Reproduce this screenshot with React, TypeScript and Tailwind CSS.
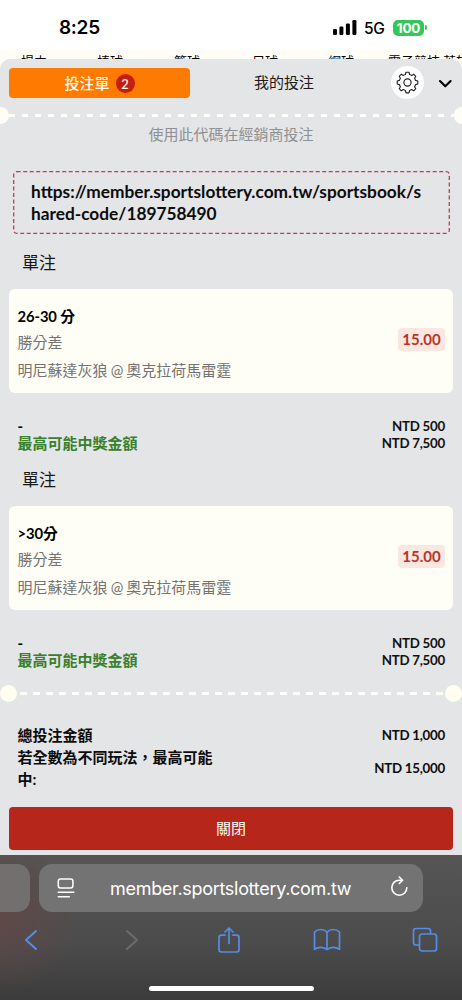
import React from "react";

const sports = [
  { name: "場中", pad: "w-[76px] pl-[21px]" },
  { name: "棒球", pad: "w-[77px] pl-[21px]" },
  { name: "籃球", pad: "w-[77px] pl-[21px]" },
  { name: "足球", pad: "w-[77px] pl-[22px]" },
  { name: "網球", pad: "w-[60px] pl-[21px]" },
  { name: "電子競技", pad: "w-[76px] pl-[21px]" },
  { name: "英雄", pad: "w-[40px]" },
];

const bets = [
  { pick: "26-30 分", market: "勝分差", match: "明尼蘇達灰狼 @ 奧克拉荷馬雷霆", odds: "15.00", stake: "NTD 500", payout: "NTD 7,500" },
  { pick: ">30分", market: "勝分差", match: "明尼蘇達灰狼 @ 奧克拉荷馬雷霆", odds: "15.00", stake: "NTD 500", payout: "NTD 7,500" },
];

function StatusBar() {
  return (
    <div className="h-[50px] shrink-0 bg-white flex justify-between pl-[59px] pr-[35px] pt-[14px] font-['Inter','Liberation_Sans',sans-serif]">
      <span className="text-[19px] leading-[28px] font-semibold text-black tracking-[-0.3px]">8:25</span>
      <div className="flex items-center h-[27px]">
        <svg width="24" height="15" viewBox="0 0 24 15">
          <rect x="0" y="9" width="4" height="6" rx="1.2" />
          <rect x="6.4" y="6.5" width="4" height="8.5" rx="1.2" />
          <rect x="12.9" y="3.5" width="4" height="11.5" rx="1.2" />
          <rect x="19.4" y="0" width="4" height="15" rx="1.2" />
        </svg>
        <span className="ml-[7px] mt-[2px] w-[22px] text-[15.5px] font-medium tracking-[-0.3px] text-black">5G</span>
        <span className="ml-[7px] w-[31px] h-[16px] rounded-[5px] bg-[#34c759] text-white text-[13.5px] leading-[16px] font-bold text-center tracking-[-0.2px]">100</span>
        <span className="ml-px w-[2px] h-[5px] rounded-r bg-[#34c759]" />
      </div>
    </div>
  );
}

function Gear() {
  return (
    <svg width="23" height="23" viewBox="0 0 23 23" fill="none" stroke="#222" strokeWidth="1.15" strokeLinejoin="round">
      <path d="M9.4 3.5 L10 1.2 H13 L13.6 3.5 Q14.7 3.8 15.7 4.4 L17.7 3.2 L19.8 5.3 L18.6 7.3 Q19.2 8.3 19.5 9.4 L21.8 10 V13 L19.5 13.6 Q19.2 14.7 18.6 15.7 L19.8 17.7 L17.7 19.8 L15.7 18.6 Q14.7 19.2 13.6 19.5 L13 21.8 H10 L9.4 19.5 Q8.3 19.2 7.3 18.6 L5.3 19.8 L3.2 17.7 L4.4 15.7 Q3.8 14.7 3.5 13.6 L1.2 13 V10 L3.5 9.4 Q3.8 8.3 4.4 7.3 L3.2 5.3 L5.3 3.2 L7.3 4.4 Q8.3 3.8 9.4 3.5 Z" />
      <circle cx="11.5" cy="11.5" r="3.6" />
    </svg>
  );
}

function BetItem({ bet }: { bet: (typeof bets)[number] }) {
  return (
    <section className="h-[217px]">
      <h2 className="h-[55px] pl-[22px] pt-4 text-[17px] leading-[26px] text-[#161616]">單注</h2>
      <div className="mx-[9px] h-[104px] rounded-[6px] bg-[#fffef6] pl-[9px] pr-2 flex items-start justify-between">
        <div className="pt-[15px] -ml-[0.5px]">
          <p className="text-[14.8px] leading-[25px] font-bold text-black tracking-[-0.1px]">{bet.pick}</p>
          <p className="text-[15px] leading-[26px] text-[#737373]">{bet.market}</p>
          <p className="text-[15px] leading-[30px] text-[#737373] [word-spacing:-0.7px]">{bet.match}</p>
        </div>
        <span className="mt-[39px] h-[23px] w-[47px] rounded-[4px] bg-[#f9e7e0] text-center text-[15px] leading-[23px] font-bold text-[#b7342b]">{bet.odds}</span>
      </div>
      <div className="mt-[24px] pl-[18px] pr-[17px] flex justify-between">
        <div className="-ml-[0.5px] font-bold text-[15px]">
          <p className="leading-[18px] text-black">-</p>
          <p className="leading-[17px] text-[#39802c]">最高可能中獎金額</p>
        </div>
        <div className="pt-px text-right text-[13.3px] leading-[17px] font-bold text-[#111] tracking-[-0.25px]">
          <p>{bet.stake}</p>
          <p>{bet.payout}</p>
        </div>
      </div>
    </section>
  );
}

function Safari() {
  return (
    <footer className="h-[145px] shrink-0 bg-[radial-gradient(circle_at_0_60px,#604747_0,#60474700_80px),linear-gradient(#555_0,#4c4c4c_60%,#3b3b3b_100%)] font-['Inter','Liberation_Sans',sans-serif]">
      <div className="pt-[9px] flex">
        <div className="h-12 w-[30px] rounded-r-[13px] bg-[#736f6f]" />
        <div className="ml-[9px] h-12 w-[384px] rounded-[13px] bg-[#737373] flex items-center pl-[18px] pr-[14px]">
          <svg width="18" height="20" viewBox="0 0 18 20" fill="none" stroke="#fff" strokeWidth="1.5" strokeLinecap="round">
            <rect x="1.3" y="1" width="14.6" height="9" rx="2.2" />
            <path d="M1.3 14.2H16.8M1.3 18.7H12.3" />
          </svg>
          <span className="ml-[35px] mt-px w-[242px] whitespace-nowrap text-[18px] tracking-[-0.3px] text-white">member.sportslottery.com.tw</span>
          <svg className="ml-auto mb-[3px]" width="19" height="21" viewBox="0 0 19 21" fill="none" stroke="#fff" strokeWidth="1.6" strokeLinecap="round" strokeLinejoin="round">
            <path d="M16.8 11.6A7.5 7.5 0 1 1 9.3 4.2H12.3M9.3 1L12.6 4.2L9.3 7.5" />
          </svg>
        </div>
      </div>
      <nav className="mt-3 ml-[-18px] h-[32px] w-[492px] grid grid-cols-5 place-items-center text-[#558ce6]">
        <svg width="14" height="22" viewBox="0 0 14 22" fill="none" stroke="currentColor" strokeWidth="2" strokeLinecap="round" strokeLinejoin="round">
          <path d="M12 2L2 11L12 20" />
        </svg>
        <svg className="ml-[5px]" width="14" height="22" viewBox="0 0 14 22" fill="none" stroke="#6c6c6c" strokeWidth="2" strokeLinecap="round" strokeLinejoin="round">
          <path d="M2 2L12 11L2 20" />
        </svg>
        <svg className="ml-[2px]" width="24" height="29" viewBox="0 0 24 29" fill="none" stroke="currentColor" strokeWidth="1.7" strokeLinecap="round" strokeLinejoin="round">
          <path d="M8 9.2H4.4Q2 9.2 2 11.6V23.6Q2 26 4.4 26H19.6Q22 26 22 23.6V11.6Q22 9.2 19.6 9.2H16M12 17.5V2.2M8 6L12 2L16 6" />
        </svg>
        <svg className="ml-[2px]" width="28" height="24" viewBox="0 0 28 24" fill="none" stroke="currentColor" strokeWidth="1.7" strokeLinecap="round" strokeLinejoin="round">
          <path d="M14 4.2Q11.5 1.5 8 1.5Q4 1.5 1.5 4V21.3Q4.5 19.2 8 19.3Q11.5 19.4 14 21.5Q16.5 19.4 20 19.3Q23.5 19.2 26.5 21.3V4Q24 1.5 20 1.5Q16.5 1.5 14 4.2ZM14 4.2V21.5" />
        </svg>
        <svg width="26" height="26" viewBox="0 0 26 26" fill="none" stroke="currentColor" strokeWidth="1.7" strokeLinejoin="round">
          <path d="M7.5 18H4Q1.5 18 1.5 15.5V4Q1.5 1.5 4 1.5H16Q18.5 1.5 18.5 4V7" />
          <rect x="7.5" y="7" width="17" height="17" rx="2.5" />
        </svg>
      </nav>
      <div className="ml-[149px] mt-[30px] h-[5px] w-[165px] rounded-full bg-white" />
    </footer>
  );
}

export default function App() {
  return (
    <div lang="zh-Hant" className="h-[1000px] w-[462px] overflow-hidden flex flex-col bg-[#fffdf5] font-['Lato','Noto_Sans_CJK_TC',sans-serif]">
      <StatusBar />
      <div className="h-[9px] shrink-0 overflow-hidden flex text-[13px] leading-[20px] text-black whitespace-nowrap">
        {sports.map((s) => (
          <span key={s.name} className={`shrink-0 pt-px ${s.pad}`}>{s.name}</span>
        ))}
      </div>

      <main className="h-[796px] shrink-0 overflow-hidden rounded-t-[10px] bg-[#e4e5e7]">
        <header className="h-[47px] pt-[7px] pl-[9px] flex items-start">
          <button className="mt-[2px] h-[30px] w-[181px] rounded-[4px] bg-[#ff7a00] flex items-center justify-center gap-[6px] text-[15px] font-medium text-[#fffdf5]">
            投注單
            <span className="size-[19px] rounded-full bg-[#c41e12] text-[13px] leading-[20px] text-center font-medium">2</span>
          </button>
          <button className="w-[188px] h-[33px] text-[15px] text-[#1b1b1b]">我的投注</button>
          <span className="ml-[13px] size-[33px] rounded-full bg-white flex items-center justify-center"><Gear /></span>
          <svg className="ml-[14px] mt-[12px]" width="14" height="12" viewBox="0 0 14 12" fill="none" stroke="#000" strokeWidth="2.1" strokeLinecap="round" strokeLinejoin="round">
            <path d="M2 3L7.3 8.3L12.6 3" />
          </svg>
        </header>

        <div className="h-[18px] flex items-center justify-between">
          <span className="h-[17px] w-[9px] rounded-r-full bg-[#fffdf5]" />
          <span className="h-[3px] w-[445px] bg-[repeating-linear-gradient(90deg,#fffefa_0_6px,transparent_6px_13px)]" />
          <span className="h-[17px] w-[8px] rounded-l-full bg-[#fffdf5]" />
        </div>
        <p className="h-[47px] text-center text-[15px] leading-[21px] text-[#8f9093]">使用此代碼在經銷商投注</p>

        <div className="relative mx-[13px] h-[63px] w-[437px] pl-[18px] pt-[10px] text-[17.3px] leading-[22px] font-bold text-[#0c0c0c] whitespace-nowrap">
          <svg className="absolute inset-0" width="437" height="63" fill="none" stroke="#c63a4b" strokeWidth="1.3" strokeDasharray="4 2.5">
            <rect x="0.7" y="0.7" width="435.6" height="61.6" rx="3" />
          </svg>
          https://member.sportslottery.com.tw/sportsbook/s<br />hared-code/189758490
        </div>

        {bets.map((bet) => (
          <BetItem key={bet.pick} bet={bet} />
        ))}

        <div className="mt-4 h-[18px] flex items-center justify-between">
          <span className="size-[17px] rounded-full bg-[#fffef0]" />
          <span className="h-[3px] w-[423px] bg-[repeating-linear-gradient(90deg,#fffefa_0_7px,transparent_7px_13px)]" />
          <span className="size-[17px] rounded-full bg-[#fffef0]" />
        </div>

        <div className="pt-[22px] pl-[17.5px] pr-[17px] font-bold text-[#0c0c0c]">
          <div className="flex justify-between items-center">
            <span className="text-[15px] leading-[22px]">總投注金額</span>
            <span className="text-[13.3px] leading-[22px] tracking-[-0.25px]">NTD 1,000</span>
          </div>
          <div className="flex justify-between items-center">
            <span className="w-[205px] text-[15px] leading-[22px]">若全數為不同玩法，最高可能中:</span>
            <span className="text-[13.3px] leading-[22px] tracking-[-0.25px]">NTD 15,000</span>
          </div>
        </div>

        <button className="mt-[17px] ml-[9px] h-[43px] w-[444px] rounded-[4px] bg-[#b6261b] text-[15px] text-[#fffdf5]">關閉</button>
      </main>

      <Safari />
    </div>
  );
}
